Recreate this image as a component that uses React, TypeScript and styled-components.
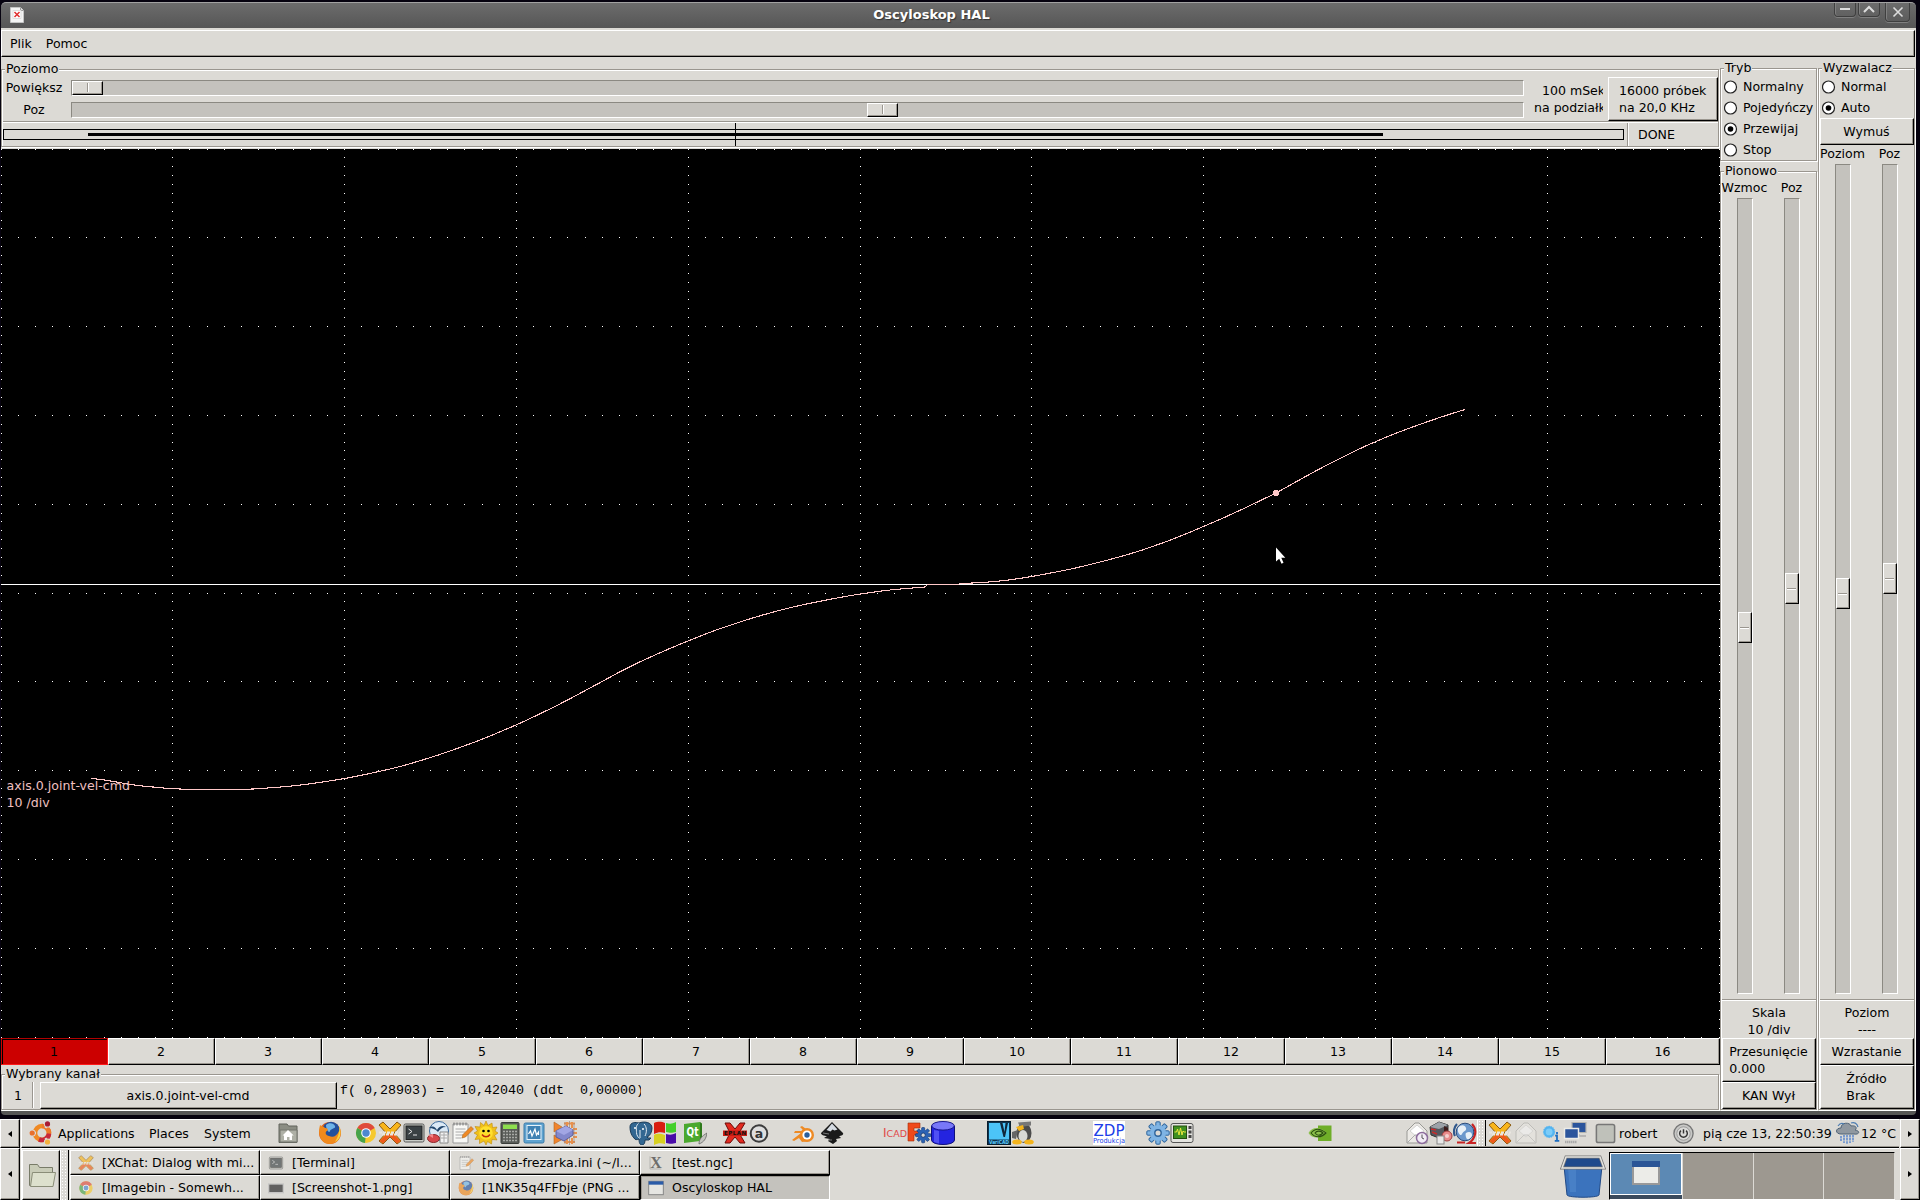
import React from 'react';
import styled, { createGlobalStyle, css } from 'styled-components';

const BG = '#dcdad5';
const TROUGH = '#c4c2bd';
const SHADE = '#9a968f';

const GlobalStyle = createGlobalStyle`
  * {
    box-sizing: border-box;
  }
  body {
    margin: 0;
    width: 1920px;
    height: 1200px;
    overflow: hidden;
    background: #06020f;
    font-family: 'DejaVu Sans', sans-serif;
    font-size: 12.55px;
    color: #000;
    white-space: pre;
    cursor: default;
  }
  svg {
    display: block;
    flex: none;
  }
`;

const raised = css`
  border: 1px solid;
  border-color: #fff #000 #000 #fff;
  box-shadow: inset -1px -1px 0 ${SHADE};
  background: ${BG};
`;

const Desktop = styled.div`
  display: flex;
  flex-direction: column;
  height: 1200px;
  padding-top: 2px;
`;

/* ---------- window ---------- */

const Window = styled.div`
  display: flex;
  flex-direction: column;
  width: 1915px;
  height: 1113px;
  margin: 0 0 4px 1px;
`;

const TitleBar = styled.div`
  display: flex;
  flex: none;
  height: 26px;
  padding-left: 9px;
  padding-right: 6px;
  border-top: 1px solid #a2a2a2;
  border-radius: 5px 5px 0 0;
  background: linear-gradient(#6c6c6c, #565656);
`;

const WindowIcon = styled.div`
  width: 15px;
  padding-top: 4px;
`;

const Title = styled.div`
  flex: 1;
  padding-left: 4px;
  text-align: center;
  font-size: 13px;
  font-weight: bold;
  line-height: 23px;
  color: #fff;
  text-shadow: 1px 1px 1px #333;
`;

const TitleButton = styled.div<{ $w: number; $h: number; $ml?: number }>`
  width: ${(p) => p.$w}px;
  height: ${(p) => p.$h}px;
  margin-left: ${(p) => p.$ml || 0}px;
  border: 1px solid #3f3f3f;
  border-top: none;
  border-radius: 0 0 4px 4px;
  box-shadow: inset 1px 0 0 #808080, 0 1px 0 #808080;
  display: flex;
  align-items: center;
  justify-content: center;
`;

const MenuBar = styled.div`
  flex: none;
  height: 29px;
  padding-top: 2px;
  background: ${BG};
`;

const MenuItems = styled.div`
  ${raised}
  display: flex;
  gap: 14px;
  height: 27px;
  margin-right: 1px;
  padding-left: 8px;
  line-height: 25px;
`;

const Body = styled.div`
  display: flex;
  flex: none;
  height: 1054px;
  background: ${BG};
`;

const WindowFoot = styled.div`
  flex: none;
  height: 4px;
  background: #565656;
  border-radius: 0 0 5px 5px;
`;

const Main = styled.div`
  display: flex;
  flex-direction: column;
  width: 1719px;
`;

const ScopeArea = styled.div`
  flex: none;
  padding-top: 2px;
`;

const Frame = styled.div<{ $h: number; $w: number; $mt?: number }>`
  display: flex;
  flex-direction: column;
  flex: none;
  width: ${(p) => p.$w}px;
  height: ${(p) => p.$h}px;
  margin-top: ${(p) => p.$mt || 0}px;
  border: 1px solid ${SHADE};
  box-shadow: inset 1px 1px 0 #fff, 1px 1px 0 #fff;
`;

const Legend = styled.div`
  flex: none;
  align-self: flex-start;
  height: 14px;
  margin: -8px 0 0 3px;
  padding: 0 1px;
  line-height: 14px;
  background: ${BG};
`;

const Rule = styled.div`
  flex: none;
  height: 2px;
  margin-left: 1px;
  background: linear-gradient(${SHADE} 50%, #fff 50%);
`;

const Button = styled.div<{ $h: number }>`
  ${raised}
  flex: none;
  display: flex;
  align-items: center;
  justify-content: center;
  height: ${(p) => p.$h}px;
  padding-right: 1px;
  line-height: 17px;
`;

/* ---------- horizontal controls ---------- */

const Horizontal = styled.div`
  display: flex;
  height: 45px;
`;

const Scales = styled.div`
  display: flex;
  flex-direction: column;
  gap: 6px;
  width: 1522px;
  padding-top: 4px;
`;

const ScaleRow = styled.div`
  display: flex;
  height: 16px;
`;

const ScaleLabel = styled.div`
  width: 64px;
  margin-right: 5px;
  text-align: center;
  line-height: 15px;
`;

const HTrough = styled.div`
  flex: 1;
  border: 1px solid;
  border-color: #8b8982 #fff #fff #8b8982;
  background: ${TROUGH};
`;

const HThumb = styled.div<{ $at: number }>`
  ${raised}
  display: flex;
  justify-content: center;
  width: 31px;
  height: 14px;
  margin-left: ${(p) => p.$at}px;
  padding: 1px 0 2px;
  &::after {
    content: '';
    width: 2px;
    background: linear-gradient(90deg, ${SHADE} 50%, #fff 50%);
  }
`;

const PerDiv = styled.div`
  width: 69px;
  margin: 6px 5px 0 10px;
  overflow: hidden;
  line-height: 17px;
`;

const Indent = styled.span`
  padding-left: 8px;
`;

const SampleButton = styled.div`
  ${raised}
  width: 110px;
  height: 44px;
  margin-top: 1px;
  padding: 4px 0 0 10px;
  line-height: 17px;
`;

const StatusRow = styled.div`
  display: flex;
  height: 23px;
  padding-left: 1px;
`;

const State = styled.div`
  margin-left: 3px;
  flex: 1;
  padding-left: 10px;
  border-left: 1px solid ${SHADE};
  box-shadow: inset 1px 0 0 #fff;
  line-height: 23px;
`;

/* ---------- channels ---------- */

const Channels = styled.div`
  display: flex;
  flex: none;
  height: 27px;
`;

const Channel = styled.div<{ $on: boolean }>`
  ${raised}
  width: 107px;
  padding-right: 1px;
  text-align: center;
  line-height: 25px;
  &:last-child {
    width: 114px;
  }
  ${(p) =>
    p.$on &&
    css`
      background: #cc0000;
      border-color: #b00000 #ff1a1a #ff1a1a #cc0000;
      box-shadow: inset 1px 1px 0 #000;
    `}
`;

const SelectedRow = styled.div`
  display: flex;
  height: 28px;
  padding-top: 1px;
`;

const ChannelNo = styled.div`
  width: 32px;
  height: 26px;
  padding-left: 12px;
  border-right: 1px solid #fff;
  box-shadow: inset -1px 0 0 ${SHADE};
  line-height: 28px;
`;

const SourceButton = styled.div`
  ${raised}
  width: 297px;
  height: 27px;
  margin-left: 6px;
  padding-right: 1px;
  text-align: center;
  line-height: 26px;
`;

const Readout = styled.div`
  width: 301px;
  margin-left: 3px;
  overflow: hidden;
  font-family: 'Liberation Mono', monospace;
  font-size: 13.33px;
  line-height: 17px;
`;

/* ---------- right hand panels ---------- */

const Side = styled.div`
  width: 98px;
  padding-top: 11px;
`;

const Radios = styled.div`
  flex: none;
  padding-top: 1px;
`;

const RadioRow = styled.div`
  display: flex;
  align-items: center;
  gap: 5px;
  height: 21px;
  padding-left: 3px;
  line-height: 21px;
`;

const SliderGrid = styled.div<{ $h: number; $top: number }>`
  display: grid;
  flex: none;
  grid-template-columns: 48px 46px;
  grid-template-rows: 17px ${(p) => p.$h}px;
  justify-items: center;
  margin-top: ${(p) => p.$top}px;
  margin-bottom: 5px;
  line-height: 14px;
`;

const SliderName = styled.div`
  padding-right: 1px;
`;

const VTrough = styled.div`
  width: 16px;
  border: 1px solid;
  border-color: #8b8982 #fff #fff #8b8982;
  background: ${TROUGH};
`;

const VThumb = styled.div<{ $at: number }>`
  ${raised}
  width: 14px;
  height: 31px;
  margin-top: ${(p) => p.$at}px;
  padding: 14px 2px 0 1px;
  &::after {
    content: '';
    display: block;
    height: 2px;
    background: linear-gradient(${SHADE} 50%, #fff 50%);
  }
`;

const Values = styled.div`
  flex: none;
  height: 37px;
  padding: 3px 0 0 1px;
  text-align: center;
  line-height: 17px;
`;

const SideButtons = styled.div`
  flex: none;
  margin-left: 1px;
  width: 94px;
`;

/* ---------- desktop panels ---------- */

const PanelRow = styled.div<{ $h: number }>`
  display: flex;
  flex: none;
  height: ${(p) => p.$h}px;
  background: ${BG};
`;

const Hide = styled.div`
  ${raised}
  flex: none;
  display: flex;
  align-items: center;
  justify-content: center;
  width: 20px;
`;

const Tray = styled.div`
  display: flex;
  align-items: center;
  flex: none;
  width: 1878px;
  margin: 0 1px;
  padding-bottom: 1px;
  border-top: 1px solid #fff;
  border-left: 1px solid #fff;
  border-bottom: 1px solid #000;
  box-shadow: inset 0 -1px 0 ${SHADE};
`;

const Item = styled.div<{ $ml: number; $w: number }>`
  flex: none;
  display: flex;
  justify-content: center;
  width: ${(p) => p.$w}px;
  margin-left: ${(p) => p.$ml}px;
`;

const TextItem = styled(Item)`
  justify-content: flex-start;
  padding-top: 1px;
  line-height: 25px;
`;

const Grip = styled.div`
  flex: none;
  align-self: stretch;
  width: 9px;
  border-right: 1px solid #000;
  border-left: 1px solid #fff;
  background-color: ${BG};
  background-image: radial-gradient(#fff 0.8px, transparent 1px);
  background-size: 3px 3px;
`;

const TaskBar = styled.div`
  display: flex;
  flex: none;
  width: 1878px;
  margin: 0 1px;
  padding-top: 1px;
  border-top: 1px solid #fff;
  border-left: 1px solid #fff;
`;

const FolderButton = styled.div`
  ${raised}
  width: 38px;
  padding: 12px 0 0 5px;
`;

const Tasks = styled.div`
  display: grid;
  grid-template-columns: repeat(4, 190px);
  grid-template-rows: 25px 25px;
  grid-auto-flow: column;
  margin-left: 1px;
`;

const Task = styled.div<{ $on?: boolean }>`
  ${raised}
  display: flex;
  align-items: center;
  gap: 8px;
  padding-left: 7px;
  line-height: 24px;
  ${(p) =>
    p.$on &&
    css`
      background: ${TROUGH};
      border-color: #000 #fff #fff #000;
      box-shadow: inset 1px 1px 0 ${SHADE};
    `}
`;

const TaskIcon = styled.div<{ $dim: boolean }>`
  width: 16px;
  opacity: ${(p) => (p.$dim ? 0.65 : 1)};
`;

const Trash = styled.div`
  margin: 4px 3px 0 730px;
`;

const Pager = styled.div`
  display: flex;
  gap: 1px;
  width: 286px;
  height: 48px;
  margin-top: 2px;
  border: 1px solid #000;
  border-right-color: #fff;
  border-bottom-color: #fff;
`;

const Workspace = styled.div<{ $on?: boolean }>`
  display: flex;
  align-items: center;
  justify-content: center;
  flex: 1;
  background: ${(p) => (p.$on ? '#5c89b4' : '#9d9890')};
  box-shadow: 1px 0 0 ${BG};
  ${(p) =>
    p.$on &&
    css`
      border: 1px solid #fff;
      height: 42px;
      padding-bottom: 2px;
      box-shadow: 0 4px 0 #3b4a5c;
    `}
`;

/* ---------- scope ---------- */

const X0 = 1;
const Y0 = 149;
const DIV_X = 171.8;
const DIV_Y = 88.8;

const gridPath = () => {
  let d = '';
  const dot = (x: number, y: number) => {
    d += `M${Math.floor(x + 0.001)} ${Math.floor(y + 0.001)}h1v1h-1z`;
  };
  for (let row = 0; row <= 10; row++) {
    for (let i = 0; i <= 100; i++) dot(X0 + (i * DIV_X) / 10, Y0 + row * DIV_Y);
  }
  for (let col = 0; col <= 10; col++) {
    for (let i = 0; i <= 100; i++) dot(X0 + col * DIV_X, Y0 + (i * DIV_Y) / 10);
  }
  return d;
};

type Point = [number, number];

const trace: Point[] = [
  [91, 778.3], [107, 780.4], [122, 783], [137, 785.4], [155, 787.2], [167, 788.3], [185, 789.2],
  [219, 789.5], [253, 789], [270, 787.8], [292, 786], [317, 782.8], [344, 778.6], [363, 774.9],
  [383, 770.6], [400, 766.5], [430, 757.7], [450, 751], [480, 740], [516.6, 724.7], [540, 713.8],
  [564.3, 701.7], [602.3, 681.4], [625, 669.2], [654.3, 655.3], [688.5, 640.8], [718.5, 629.2],
  [751.7, 618.3], [775, 611.6], [800, 605.4], [839, 597.6], [860.5, 594], [890, 590], [924.7, 587],
];

const traceEnd: Point[] = [
  [961, 583.6], [986, 582.2], [1010, 579.8], [1031, 576.6], [1069, 569.4], [1099, 562.3],
  [1120, 556.7], [1141.7, 550.2], [1176.5, 537.7], [1216.7, 520.8], [1240, 510.3], [1256.7, 502.3],
  [1276, 493], [1290, 485.2], [1308, 475.2], [1326.7, 465.2], [1356.7, 450.2], [1375, 441.9],
  [1400, 431.7], [1426.7, 422], [1446.7, 415.2], [1465, 409.5],
];

const smooth = (pts: Point[]) => {
  const slope = (i: number) => {
    const a = pts[Math.max(i - 1, 0)];
    const b = pts[Math.min(i + 1, pts.length - 1)];
    return (b[1] - a[1]) / (b[0] - a[0]);
  };
  let d = `${pts[0][0]} ${pts[0][1]}`;
  for (let i = 1; i < pts.length; i++) {
    const [x1, y1] = pts[i - 1];
    const [x2, y2] = pts[i];
    const h = (x2 - x1) / 3;
    d += `C${x1 + h} ${y1 + slope(i - 1) * h} ${x2 - h} ${y2 - slope(i) * h} ${x2} ${y2}`;
  }
  return d;
};

const Scope = () => (
  <svg width="1719" height="889" viewBox="1 149 1719 889">
    <rect x="1" y="149" width="1719" height="889" fill="#000" />
    <path d={gridPath()} fill="#fff" shapeRendering="crispEdges" />
    <rect x="1" y="584" width="1719" height="1" fill="#fff" shapeRendering="crispEdges" />
    <path
      d={`M${smooth(trace)}L927.5 584.5H957L${smooth(traceEnd)}`}
      fill="none"
      stroke="#ffc8c8"
      strokeWidth="1.1"
      shapeRendering="crispEdges"
    />
    <rect x="1273" y="491" width="6" height="4" fill="#ffc8c8" />
    <rect x="1274" y="490" width="4" height="6" fill="#ffc8c8" />
    <g fill="#f0c0c0" fontSize="12.55">
      <text x="6.500" y="790" textLength="123.500">axis.0.joint-vel-cmd</text>
      <text x="6.500" y="807">10 /div</text>
    </g>
    <path d="M1276 547.5v14l3.2-2.8 2.3 5 2-.9-2.2-5h4z" fill="#fff" />
  </svg>
);

const Progress = () => (
  <svg width="1621" height="23" shapeRendering="crispEdges">
    <rect x="0.5" y="6.5" width="1620" height="10" fill="none" stroke="#000" />
    <rect x="85" y="10" width="1295" height="3" />
    <rect x="732" y="0" width="1" height="23" />
  </svg>
);

const Radio = ({ label, on }: { label: string; on?: boolean }) => (
  <RadioRow>
    <svg width="14" height="14">
      <circle cx="6.500" cy="7" r="6" fill="#fff" stroke="#222" strokeWidth="1.2" />
      {on && <circle cx="6.500" cy="7" r="2.8" />}
    </svg>
    {label}
  </RadioRow>
);

/* ---------- icons ---------- */

const XChat = () => (
  <>
    <path d="M1 4l4-3 7 7 7-7 4 3-7 8 7 8-4 3-7-7-7 7-4-3 7-8z" fill="#f8b51c" stroke="#8a5a10" />
    <path d="M8.500 13h7l7 7-3.500 2.500-7-7-7 7L1.500 20z" fill="#ee5a1c" />
    <path d="M1 11.500h22M4 13.500h18" stroke="#e9e6e0" strokeWidth="1.800" strokeDasharray="3 1" />
  </>
);

const Chrome = () => (
  <>
    <circle cx="12" cy="12" r="10" fill="#f6c92e" />
    <path d="M12 12L3.3 7A10 10 0 0 1 20.7 7z" fill="#df4a3c" />
    <path d="M12 12L3.3 7A10 10 0 0 0 11 22z" fill="#47a34b" />
    <circle cx="12" cy="12" r="4.8" fill="#fff" />
    <circle cx="12" cy="12" r="3.7" fill="#4d88cf" />
  </>
);

const Firefox = () => (
  <>
    <circle cx="12" cy="12" r="11" fill="#e0601a" />
    <circle cx="13" cy="9.5" r="8.7" fill="#23509c" />
    <path d="M8 4c3-3 8-2 9 1s-4 2-5 5-4-2-4-6z" fill="#6fb4e8" />
    <path d="M2 4c2 2 4 1 5 3 2 0 4 1 2 3-2 1-2 4 2 5 4 2 8 0 10-5 3 8-3 13-9 13C4 23-1 15 2 4z" fill="#f08a1d" />
    <path d="M21 5c3 6 2 13-4 16 3-5 5-10 4-16z" fill="#f9d23c" />
  </>
);

const Terminal = () => (
  <>
    <rect x="2" y="3" width="20" height="18" rx="1.5" fill="#c9ccc6" stroke="#555" />
    <rect x="4" y="5" width="16" height="13.5" fill="#3a4144" stroke="#222" />
    <path d="M6.500 8l3.500 2.500-3.500 2.500M11 14h4" fill="none" stroke="#e6e6e6" />
  </>
);

const Note = () => (
  <>
    <path d="M3 3h15v19H3z" fill="#f8f8f5" stroke="#999" />
    <path d="M4 1.500v3M7 1.500v3M10 1.500v3M13 1.500v3M16 1.500v3" stroke="#777" />
    <path d="M5.500 8h10M5.500 11h10M5.500 14h8M5.500 17h6" stroke="#aaa" />
    <path d="M12 17l1-3.500 8-8 2.500 2.500-8 8z" fill="#f08a24" stroke="#a8641c" strokeWidth="0.600" />
  </>
);

const Gear = ({ fill = '#7fb4e4', edge = '#2f659c' }) => (
  <>
    {[0, 45, 90, 135].map((a) => (
      <rect key={a} x="9.800" y="0.800" width="4.400" height="22.400" rx="1" fill={fill} stroke={edge} transform={`rotate(${a} 12 12)`} />
    ))}
    <circle cx="12" cy="12" r="8" fill={fill} />
    <circle cx="12" cy="12" r="3.200" fill={BG} stroke={edge} strokeWidth="1.400" />
  </>
);

const Envelope = () => (
  <>
    <path d="M2 10l8-8h4l8 8v12H2z" fill="#eceae6" stroke="#999995" />
    <path d="M5 10l7-6 7 6-7 6z" fill="#fff" stroke="#bbb" strokeWidth="0.600" />
    <path d="M2 22l8-8h4l8 8" fill="none" stroke="#aaa" />
  </>
);

const icons: Record<string, React.ReactNode> = {
  ubuntu: (
    <>
      <circle cx="13" cy="12" r="7" fill="none" stroke="#f08a24" strokeWidth="4.600" />
      <path d="M13 5a7 7 0 0 1 7 7" fill="none" stroke="#ee7a2c" strokeWidth="4.600" />
      <path d="M20 12.500a7 7 0 0 1-10 5.800" fill="none" stroke="#c8283c" strokeWidth="4.600" />
      <path d="M16.500 7l2-4M16.500 17l2 4M7 12H3" stroke={BG} strokeWidth="2" />
      <circle cx="18.500" cy="2.900" r="3.600" fill={BG} />
      <circle cx="3.200" cy="12" r="3.600" fill={BG} />
      <circle cx="18.500" cy="21" r="3.600" fill={BG} />
      <circle cx="18.500" cy="2.900" r="2.600" fill="#a81c34" />
      <circle cx="3.200" cy="12" r="2.600" fill="#e8702c" />
      <circle cx="18.500" cy="21" r="2.600" fill="#f4b13c" />
    </>
  ),
  home: (
    <>
      <path d="M3 3h8l1.500 2H21v16.500H3z" fill="#8b8d83" stroke="#62645c" />
      <path d="M4 9h17v12H4z" fill="#aeb0a6" stroke="#72746c" />
      <path d="M12 9l-5.500 5.500H8V19h3v-3h2.500v3H16v-4.500h1.700z" fill="#fff" />
    </>
  ),
  firefox: <Firefox />,
  chrome: <Chrome />,
  xchat: <XChat />,
  terminal: <Terminal />,
  office: (
    <>
      <circle cx="13" cy="10" r="9.500" fill="#dceaf6" stroke="#3c6b9c" />
      <path d="M3 7c4-3 6-1 8 2 2-4 6-5 9-3-4 0-6 2-8 5-3-3-5-4-9-4z" fill="#24486e" />
      <path d="M14 11h8v11h-8z" fill="#f3f3f3" stroke="#888" />
      <path d="M15 14h6M15 17h6M18 12v9" stroke="#aaa" />
      <ellipse cx="7.500" cy="17.500" rx="6" ry="4" fill="#d8474b" stroke="#8c2a2c" />
      <path d="M2 14l5-1v4z" fill="#f2888b" />
    </>
  ),
  note: <Note />,
  sun: (
    <>
      <path
        d="M12 0l2 4.500L18 2l.5 4.500L23 6l-2 4 3 2-3.500 2.500L23 19l-5-.5-.5 4.500-4-2.500L12 24l-2-4-4.500 2.500V18L1 18.500 3.500 14 0 12l3.500-2L1 5.500l5 .5.500-4.500L10 4.500z"
        fill="#f0c01a"
        stroke="#c08a0c"
        strokeWidth="0.600"
      />
      <circle cx="12" cy="12" r="6.800" fill="#ffe02c" />
      <circle cx="9.500" cy="10" r="1.300" />
      <circle cx="14.500" cy="10" r="1.300" />
      <path d="M8 13.500c2 3 6 3 8 0" fill="none" stroke="#c02c10" strokeWidth="1.400" />
    </>
  ),
  calc: (
    <>
      <rect x="3" y="1.500" width="18" height="21" rx="1" fill="#5a5c58" stroke="#3a3c38" />
      <rect x="5" y="3.500" width="14" height="4.500" fill="#8ede4e" />
      {[10, 13, 16, 19].map((y) => (
        <path key={y} d={`M5 ${y + 0.5}h14`} stroke="#a9aaa6" strokeWidth="1.600" strokeDasharray="2 1" />
      ))}
    </>
  ),
  sysmon: (
    <>
      <rect x="2" y="2" width="20" height="20" rx="1.500" fill="#5fa3d0" stroke="#3d7aa6" />
      <rect x="5" y="4.500" width="14" height="14" fill="#3f82b4" stroke="#e8f3fa" />
      <path d="M6.500 13l2-3 1.500 5 3-7 1.500 6 2-3v3" fill="none" stroke="#fff" strokeWidth="1.200" />
    </>
  ),
  chip: (
    <>
      <path d="M1 1l8 5-8 5zM1 14l9 4-9 5z" fill="#f0842c" stroke="#b06424" strokeWidth="0.600" />
      <path d="M14 1v5M19 1v6M14 17v6M19 17v6M11 2.500h11M11 21h11M20 8h4M20 12h4M20 16h4" stroke="#e8904c" strokeWidth="2" />
      <path d="M12 1v22M16.500 0v24M21 2v20" stroke="#a08878" strokeWidth="0.700" />
      <path d="M3 10l10-5 7 4v5l-9 6-8-4z" fill="#8388cc" stroke="#5c5f9c" />
      <path d="M3 10l10-5 7 4-9 5z" fill="#a2a6e4" />
    </>
  ),
  postgres: (
    <>
      <path d="M1 6c0-5 6-5 9-4 5-2 13-1 13 5 0 4-2 8-5 9l1 1h3l-2 2h-4c0 3-1 5-3 5s-3-2-3-6c-2 1-4 1-5-1C2 14 1 10 1 6z" fill="#336791" stroke="#1c3c58" />
      <path d="M9.500 2.500c-3 2-2 6-2 9s2 5 3 6M15 3c3 3 3 8 1 12M11 9v8" fill="none" stroke="#e8eff5" />
      <circle cx="6" cy="7" r="1" fill="#fff" />
      <circle cx="14" cy="8" r="1" fill="#fff" />
    </>
  ),
  flag: (
    <>
      <path d="M1 2c5-2 8-1 11 0v10c-4-1-7-1-11 1z" fill="#d81e10" />
      <path d="M13 2c4 1 6 1 10-1v10c-4 1-6 1-10 0z" fill="#45d02a" />
      <path d="M1 14c4-2 7-1 11 0v9c-4-1-7-1-11 1z" fill="#d8d020" />
      <path d="M13 13c4 1 6 1 10-1v10c-4 1-6 1-10 0z" fill="#4a0ca8" />
    </>
  ),
  qt: (
    <>
      <path d="M1 3l16-2v19L1 22z" fill="#4ba82e" />
      <path d="M17 1l2 1.500V19l-2 1z" fill="#2f7a1c" />
      <text x="3.500" y="15" fontSize="12" fontWeight="bold" fill="#fff" textLength="12" lengthAdjust="spacingAndGlyphs">Qt</text>
      <path d="M24 12c-1 6-3 9-8 11 0-5 3-8 8-11z" fill="#c4c4be" stroke="#666" strokeWidth="0.800" />
    </>
  ),
  eplan: (
    <>
      <path d="M2 2h5l5 6 5-6h5l-6 10 6 10h-5l-5-6-5 6H2l5-10z" fill="#e32a20" stroke="#6c0c08" />
      <rect x="0" y="9.500" width="24" height="5.500" fill="#c81c14" />
      <text x="1" y="14.300" fontSize="5.500" fontWeight="bold" fill="#111" textLength="22">EPLAN</text>
    </>
  ),
  at: (
    <>
      <circle cx="12" cy="12.500" r="8.300" fill="#dedede" stroke="#3c3c3c" strokeWidth="2" />
      <text x="12" y="17" fontSize="12.500" fontWeight="bold" textAnchor="middle" fill="#333">a</text>
    </>
  ),
  blender: (
    <>
      <path d="M1 19l9-7H3l1-2h9L9 6l2-1 11 8-3 7-8 1-3-4-5 3z" fill="#ee8a24" />
      <circle cx="16" cy="14" r="7" fill="#ee8a24" />
      <circle cx="16" cy="14" r="4.600" fill="#fff" />
      <circle cx="16" cy="14" r="2.700" fill="#2a5e9c" />
    </>
  ),
  inkscape: (
    <>
      <path d="M12 1l11 11c1 2-2 3-4 3l2 2-5 1 1 2-4 3-5-3 2-2-6-1 3-2c-3 0-6-1-6-3z" fill="#1a1a1a" />
      <path d="M12 2.500l5.500 6-3 1-2-1-2 2-4-1.500z" fill="#d5dbe2" />
      <path d="M3 12l6 1M8 19h4" stroke="#777" />
    </>
  ),
  icad: (
    <text x="0" y="16" fontSize="11.500" fill="#e04848" textLength="24" lengthAdjust="spacingAndGlyphs">
      I<tspan fontSize="9">CAD</tspan>
    </text>
  ),
  freecad: (
    <>
      <path d="M1 2h12v5H7v3h5v4H7v6H1z" fill="#f04a1c" stroke="#a02c0c" strokeWidth="0.600" />
      <g transform="translate(8 6) scale(.68)">
        <Gear fill="#2b62b4" edge="#163c78" />
      </g>
    </>
  ),
  db: (
    <>
      <path d="M.500 5v14c0 6 23 6 23 0V5z" fill="#2424e0" stroke="#10107c" />
      <path d="M3 9v12l5 1.500V10z" fill="#5050f4" />
      <ellipse cx="12" cy="4.800" rx="11.300" ry="4.300" fill="#7878f8" stroke="#18188c" />
    </>
  ),
  varicad: (
    <>
      <rect x="0.500" y="0.500" width="23" height="23" fill="#0c3450" stroke="#081c2c" />
      <rect x="2" y="2" width="20" height="16.500" fill="#4cc4f8" />
      <path d="M13 2h2.500l2 9 1-9h2.500l-3 14h-1.500z" fill="#10283c" />
      <text x="2" y="22.800" fontSize="5.500" fontWeight="bold" fill="#5cc8f8" textLength="20" lengthAdjust="spacingAndGlyphs">VariCAD</text>
    </>
  ),
  tux: (
    <>
      <ellipse cx="13" cy="12" rx="7.500" ry="10" fill="#4c4c4c" />
      <path d="M1 11l6-2-2 9-4-1z" fill="#666" />
      <ellipse cx="12" cy="15" rx="4.500" ry="6" fill="#d8d8d4" />
      <path d="M7 1.500l13-1v4L9 6z" fill="#777" />
      <path d="M5 6l7-2 1 4-5 2z" fill="#f4b41c" />
      <ellipse cx="6" cy="21" rx="4.800" ry="2.500" fill="#f4b41c" />
      <ellipse cx="18" cy="21" rx="4.800" ry="2.500" fill="#f4b41c" />
    </>
  ),
  gear: <Gear />,
  scope: (
    <>
      <rect x="1" y="2.500" width="22" height="19" rx="2" fill="#e4e4e0" stroke="#555" />
      <rect x="3.500" y="5" width="13" height="12.500" fill="#3f9020" stroke="#24500f" />
      <path d="M4.500 11h2l1-3 1.500 6 1.500-7 1.500 7 1-4 1 1h2" fill="none" stroke="#e8e83c" />
      <path d="M20 5v13" stroke="#444" strokeWidth="3" strokeDasharray="3 1.500" />
    </>
  ),
  nvidia: (
    <>
      <path d="M10 4.500h13.500V20H10z" fill="#6fae28" />
      <path d="M.500 12C4 6 12 5 19 12c-6 6-15 6-18.500 0z" fill="#8cc04c" />
      <path d="M3 12c4-5 9-5 15 0-5 5-11 5-15 0zM7 12c2-3 6-2 8 0-3 3-6 3-8 0z" fill="none" stroke="#2c5010" strokeWidth="1.100" />
    </>
  ),
  mailclock: (
    <>
      <Envelope />
      <circle cx="17" cy="17" r="5.500" fill="#f2ecf6" stroke="#8c6c9c" strokeWidth="1.500" />
      <path d="M17 13.500V17l2 1" fill="none" stroke="#555" />
    </>
  ),
  printer: (
    <>
      <path d="M1 6l9-5 9 3v9l-9 4-8-3z" fill="#54585e" stroke="#333" />
      <path d="M1 6l9-5 9 3-9 4z" fill="#9ca2a8" />
      <path d="M2 8l5 1M3 11l5 2" stroke="#c82c2c" strokeWidth="1.500" />
      <path d="M15 5l4 2v6l-4-2z" fill="#3c1c1c" />
      <circle cx="18" cy="15" r="5" fill="#e88c8c" stroke="#a03c3c" />
      <circle cx="18" cy="15" r="2" fill="#f4d0d0" />
      <rect x="8" y="15" width="7" height="8" fill="#e8e8e8" stroke="#888" />
    </>
  ),
  globe: (
    <>
      <path d="M19 3c6 6 3 15-3 19h7M4 21.500h8" fill="none" stroke="#c82424" strokeWidth="2.200" />
      <path d="M4 3c-3 3-4 8-2 12" fill="none" stroke="#30588c" strokeWidth="2.200" />
      <circle cx="12" cy="11" r="8.800" fill="#6c98cc" stroke="#2c4c7c" />
      <path d="M5 7c3-4 7-3 8 0s-3 3-4 6-5-1-4-6zM13 12c3-2 6-1 6 2s-4 5-5 4-2-5-1-6z" fill="#e8f0f7" />
    </>
  ),
  envelope: <g opacity=".45"><Envelope /></g>,
  info: (
    <>
      {[0, 22, 45, 67].map((a) => (
        <rect key={a} x="3.500" y="4.500" width="12" height="12" fill="#53b4f0" transform={`rotate(${a} 9.500 10.500)`} />
      ))}
      <circle cx="9.500" cy="10.500" r="4.500" fill="#7cccf8" />
      <path d="M20 10.500v3M17.500 15.500h2.500v7M17 22.500h6" stroke="#1c6cc0" strokeWidth="2.400" fill="none" />
    </>
  ),
  network: (
    <>
      <path d="M9 1.500h14v10H9z" fill="#2b559c" stroke="#b4b4b0" strokeWidth="1.200" />
      <path d="M16 13v2h7" stroke="#aaa" strokeWidth="1.500" fill="none" />
      <path d="M1.500 7.500h14v10h-14z" fill="#2b559c" stroke="#ecece8" strokeWidth="1.500" />
      <path d="M2 21h12" stroke="#aaa" strokeWidth="2.500" strokeDasharray="1.500 .5" />
    </>
  ),
  user: <rect x="2.500" y="2.500" width="19" height="19" rx="2" fill="#bfc1ba" stroke="#777" strokeWidth="1.600" />,
  power: (
    <>
      <circle cx="12" cy="12" r="10" fill="#c8c8c6" stroke="#777" strokeWidth="1.400" />
      <circle cx="12" cy="12" r="7" fill="#dadad8" stroke="#999" />
      <path d="M9.300 9a4 4 0 1 0 5.400 0M12 7.500v4.500" fill="none" stroke="#333" strokeWidth="1.500" />
    </>
  ),
  weather: (
    <>
      <path d="M5 13c-6 0-6-6 0-6 0-6 9-6 10-2 6-1 6 3 4 4 6 1 4 5-1 4z" fill="#9098a0" stroke="#506478" />
      <path d="M2 5c2-3 4-3 6-2M15 2c3-1 6 0 7 4" fill="none" stroke="#4c7cb0" strokeWidth="1.200" />
      <path d="M5 15v5M8 14v8M11 14v9M14 14v8M17 14v7" stroke="#5080cc" strokeWidth="1.400" strokeDasharray="2.500 .6" />
    </>
  ),
  shot: <rect x="1" y="6" width="22" height="13" fill="#222" stroke="#bbb" strokeWidth="2" />,
  xorg: (
    <>
      <path d="M3 2v19h17" fill="none" stroke="#888" />
      <text x="12" y="20" fontSize="24" fontWeight="bold" fontFamily="Liberation Serif, serif" textAnchor="middle" fill="#333">X</text>
    </>
  ),
  window: (
    <>
      <rect x="1" y="2" width="22" height="20" fill="#e6e6e2" stroke="#888" strokeWidth="1.500" />
      <rect x="1" y="2" width="22" height="5" fill="#2b5ca8" />
    </>
  ),
};

const Icon = ({ name, size = 24 }: { name: string; size?: number }) => (
  <svg width={size} height={size} viewBox="0 0 24 24">
    {icons[name]}
  </svg>
);

// [icon, left edge] of every launcher in the top panel
const launchers: [string, number][] = [
  ['home', 276], ['firefox', 318], ['chrome', 354], ['xchat', 378], ['terminal', 402], ['office', 426],
  ['note', 450], ['sun', 474], ['calc', 498], ['sysmon', 522], ['chip', 553], ['postgres', 629],
  ['flag', 653], ['qt', 683], ['eplan', 723], ['at', 747], ['blender', 791], ['inkscape', 820],
  ['icad', 883], ['freecad', 907], ['db', 931], ['varicad', 987], ['tux', 1011],
];

const applets: [string, number][] = [
  ['gear', 1146], ['scope', 1170], ['nvidia', 1308], ['mailclock', 1405], ['printer', 1429], ['globe', 1453],
];

const spaced = (list: [string, number][], start: number) =>
  list.map(([name, x], i) => (
    <Item key={name} $w={24} $ml={x - (i ? list[i - 1][1] + 24 : start)}>
      <Icon name={name} />
    </Item>
  ));

const Zdp = () => (
  <svg width="32" height="24">
    <rect width="32" height="24" fill="#fff" />
    <text x="0.500" y="14.500" fontSize="16" fill="#2040e8" textLength="31" lengthAdjust="spacingAndGlyphs">ZDP</text>
    <text x="0" y="22" fontSize="7" fill="#2040e8" textLength="32" lengthAdjust="spacingAndGlyphs">Produkcja</text>
  </svg>
);

const Arrow = ({ right }: { right?: boolean }) => (
  <svg width="4" height="6">
    <path d={right ? 'M0 0l4 3-4 3z' : 'M4 0L0 3l4 3z'} />
  </svg>
);

const tasks: [string, string][] = [
  ['xchat', '[XChat: Dialog with mi...'],
  ['chrome', '[Imagebin - Somewh...'],
  ['terminal', '[Terminal]'],
  ['shot', '[Screenshot-1.png]'],
  ['note', '[moja-frezarka.ini (~/l...'],
  ['firefox', '[1NK35q4FFbje (PNG ...'],
  ['xorg', '[test.ngc]'],
  ['window', 'Oscyloskop HAL'],
];

const App: React.FC = () => {
  const channels = Array.from({ length: 16 }, (_, i) => i + 1);

  return (
    <>
      <GlobalStyle />
      <Desktop>
        <Window>
          <TitleBar>
            <WindowIcon>
              <svg width="14" height="16">
                <path d="M.5.5h10l3 3v12H.5z" fill="#f4f4f4" stroke="#c4c4c4" />
                <path d="M10.500.5v3h3" fill="#ddd" stroke="#999" />
                <path d="M3 3.500h8v8H3z" fill="#fff" stroke="#ddd" />
                <path d="M4.500 5l5 5m0-5l-5 5" stroke="#e03030" strokeWidth="1.500" />
              </svg>
            </WindowIcon>
            <Title>Oscyloskop HAL</Title>
            <TitleButton $w={22} $h={14}>
              <svg width="12" height="12"><path d="M1 5h10" stroke="#ddd" strokeWidth="2" /></svg>
            </TitleButton>
            <TitleButton $w={22} $h={14} $ml={2}>
              <svg width="12" height="12"><path d="M1 8l5-5 5 5" fill="none" stroke="#ddd" strokeWidth="2" /></svg>
            </TitleButton>
            <TitleButton $w={25} $h={19} $ml={5}>
              <svg width="12" height="12"><path d="M1.500 1.500l9 9m0-9l-9 9" stroke="#ddd" strokeWidth="1.600" /></svg>
            </TitleButton>
          </TitleBar>

          <MenuBar>
            <MenuItems>
              <span>Plik</span>
              <span>Pomoc</span>
            </MenuItems>
          </MenuBar>

          <Body>
            <Main>
              <Frame $w={1718} $h={78} $mt={12}>
                <Legend>Poziomo</Legend>
                <Horizontal>
                  <Scales>
                    <ScaleRow>
                      <ScaleLabel>Powiększ</ScaleLabel>
                      <HTrough><HThumb $at={0} /></HTrough>
                    </ScaleRow>
                    <ScaleRow>
                      <ScaleLabel>Poz</ScaleLabel>
                      <HTrough><HThumb $at={795} /></HTrough>
                    </ScaleRow>
                  </Scales>
                  <PerDiv><Indent>100 mSek</Indent>{'\n'}na podziałkę</PerDiv>
                  <SampleButton>16000 próbek{'\n'}na 20,0 KHz</SampleButton>
                </Horizontal>
                <Rule />
                <StatusRow>
                  <Progress />
                  <State>DONE</State>
                </StatusRow>
              </Frame>
              <ScopeArea>
                <Scope />
              </ScopeArea>
              <Channels>
                {channels.map((n) => (
                  <Channel key={n} $on={n === 1}>{n}</Channel>
                ))}
              </Channels>
              <Frame $w={1718} $h={36} $mt={9}>
                <Legend>Wybrany kanał</Legend>
                <SelectedRow>
                  <ChannelNo>1</ChannelNo>
                  <SourceButton>axis.0.joint-vel-cmd</SourceButton>
                  <Readout>{'f( 0,28903) =  10,42040 (ddt  0,00000)'}</Readout>
                </SelectedRow>
              </Frame>
            </Main>

            <Side>
              <Frame $w={97} $h={93}>
                <Legend>Tryb</Legend>
                <Radios>
                  <Radio label="Normalny" />
                  <Radio label="Pojedyńczy" />
                  <Radio label="Przewijaj" on />
                  <Radio label="Stop" />
                </Radios>
              </Frame>
              <Frame $w={97} $h={939} $mt={10}>
                <Legend>Pionowo</Legend>
                <SliderGrid $h={796} $top={3}>
                  <SliderName>Wzmoc</SliderName>
                  <SliderName>Poz</SliderName>
                  <VTrough><VThumb $at={413} /></VTrough>
                  <VTrough><VThumb $at={374} /></VTrough>
                </SliderGrid>
                <Rule />
                <Values>Skala{'\n'}10 /div</Values>
                <SideButtons>
                  <Button $h={44}>Przesunięcie{'\n'}0.000</Button>
                  <Button $h={27}>KAN Wył</Button>
                </SideButtons>
              </Frame>
            </Side>

            <Side>
              <Frame $w={97} $h={1042}>
                <Legend>Wyzwalacz</Legend>
                <Radios>
                  <Radio label="Normal" />
                  <Radio label="Auto" on />
                </Radios>
                <SideButtons>
                  <Button $h={27}>Wymuś</Button>
                </SideButtons>
                <SliderGrid $h={830} $top={2}>
                  <SliderName>Poziom</SliderName>
                  <SliderName>Poz</SliderName>
                  <VTrough><VThumb $at={413} /></VTrough>
                  <VTrough><VThumb $at={398} /></VTrough>
                </SliderGrid>
                <Rule />
                <Values>Poziom{'\n'}----</Values>
                <SideButtons>
                  <Button $h={27}>Wzrastanie</Button>
                  <Button $h={44}>Źródło{'\n'}Brak</Button>
                </SideButtons>
              </Frame>
            </Side>
          </Body>
          <WindowFoot />
        </Window>

        <PanelRow $h={29}>
          <Hide><Arrow /></Hide>
          <Tray>
            <Item $w={24} $ml={7}><Icon name="ubuntu" /></Item>
            <TextItem $w={91} $ml={5}>Applications</TextItem>
            <TextItem $w={55} $ml={0}>Places</TextItem>
            <TextItem $w={52} $ml={0}>System</TextItem>
            {spaced(launchers, 256)}
            <Item $w={32} $ml={58}><Zdp /></Item>
            {spaced(applets, 1125)}
            <Grip />
            <Item $w={24} $ml={2}><Icon name="xchat" /></Item>
            <Item $w={24} $ml={2}><Icon name="envelope" /></Item>
            <Item $w={24} $ml={1}><Icon name="info" size={18} /></Item>
            <Item $w={24} $ml={0}><Icon name="network" /></Item>
            <Item $w={24} $ml={6}><Icon name="user" size={23} /></Item>
            <TextItem $w={40} $ml={2}>robert</TextItem>
            <Item $w={24} $ml={12}><Icon name="power" size={23} /></Item>
            <TextItem $w={132} $ml={8}>pią cze 13, 22:50:39</TextItem>
            <Item $w={24} $ml={1}><Icon name="weather" /></Item>
            <TextItem $w={36} $ml={1}>12 °C</TextItem>
          </Tray>
          <Hide><Arrow right /></Hide>
        </PanelRow>

        <PanelRow $h={52}>
          <Hide><Arrow /></Hide>
          <TaskBar>
            <FolderButton>
              <svg width="28" height="26">
                <path d="M1.500 1.500h8l2 3h13v18h-23z" fill="#c9ccb8" stroke="#787b68" />
                <path d="M4.500 9.500h23l-2.500 14H2.500z" fill="#dde0cd" stroke="#8a8d78" />
              </svg>
            </FolderButton>
            <Grip />
            <Tasks>
              {tasks.map(([icon, label], i) => (
                <Task key={label} $on={i === 7}>
                  <TaskIcon $dim={i !== 7}><Icon name={icon} size={16} /></TaskIcon>
                  {label}
                </Task>
              ))}
            </Tasks>
            <Trash>
              <svg width="46" height="45">
                <path d="M4 12h38l-3 29c-1 3-31 3-32 0z" fill="#3b73bd" stroke="#224a86" />
                <path d="M8 14h8v24H10z" fill="#5288cc" opacity=".6" />
                <path d="M6 3h34l4 11H2z" fill="#1f4a8c" stroke="#777" strokeWidth="3" />
                <path d="M6 3h34l4 11H2z" fill="none" stroke="#e4e4e0" strokeWidth="1.500" />
              </svg>
            </Trash>
            <Pager>
              <Workspace $on>
                <svg width="28" height="24">
                  <rect x="1" y="1" width="26" height="22" fill="#ecece8" stroke="#999" strokeWidth="2" />
                  <rect x="0" y="0" width="28" height="6" fill="#2b5596" />
                </svg>
              </Workspace>
              <Workspace />
              <Workspace />
              <Workspace />
            </Pager>
          </TaskBar>
          <Hide><Arrow right /></Hide>
        </PanelRow>
      </Desktop>
    </>
  );
};

export default App;
